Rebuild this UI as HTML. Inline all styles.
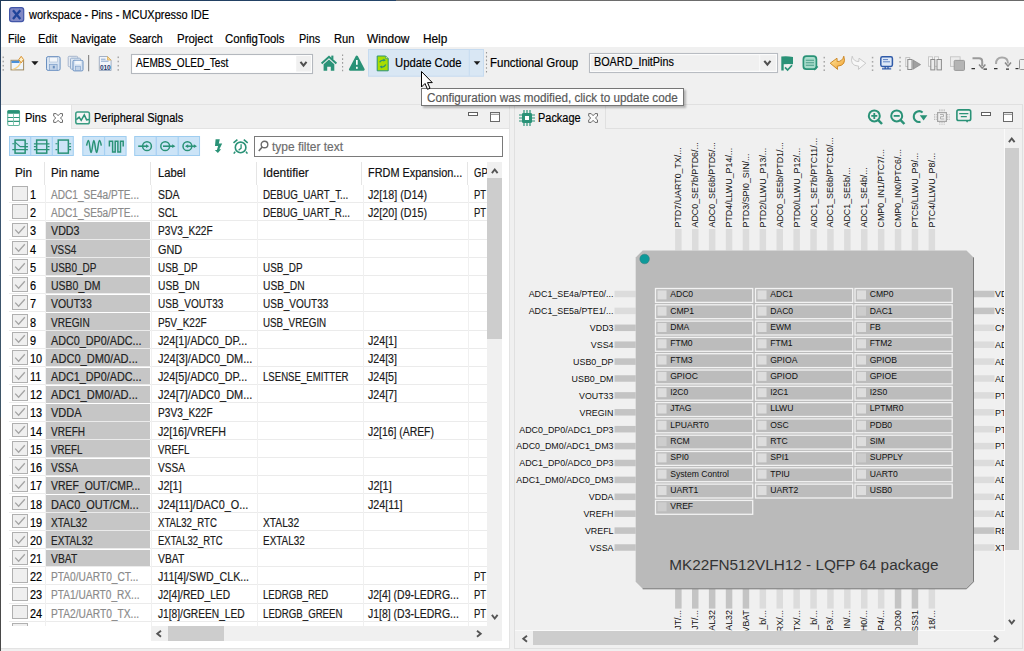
<!DOCTYPE html><html><head><meta charset="utf-8"><title>MCUXpresso</title><style>
*{box-sizing:border-box;margin:0;padding:0}
html,body{width:1024px;height:651px;overflow:hidden;background:#f0f0f0;font-family:"Liberation Sans",sans-serif;color:#000;position:relative}
.a{position:absolute}
.t{position:absolute;white-space:nowrap;line-height:1}
svg{position:absolute;overflow:visible}
</style></head><body>
<div class="a" style="left:0;top:0;width:1024px;height:47px;background:#fff"></div>
<div class="a" style="left:0;top:0;width:1024px;height:1px;background:linear-gradient(90deg,#1f3a5a 0px,#24456a 396px,#6e6e6e 396px,#6a6a6a 1024px)"></div>
<div class="a" style="left:0;top:0;width:1px;height:651px;background:linear-gradient(180deg,#1f3a5a 0px,#3a5470 200px,#3e5566 417px,#505050 418px,#484848 651px)"></div>
<svg style="left:8.6px;top:6.6px" width="15.3" height="15.3" viewBox="0 0 15.3 15.3"><rect x="0.6" y="0.6" width="14.1" height="14.1" rx="2.4" fill="#8088c4" stroke="#4256a8" stroke-width="1.2"/><path d="M4 3.2 L11.3 12.1 M11.3 3.2 L4 12.1" stroke="#1f449a" stroke-width="2.3"/></svg>
<div class="t" style="left:29.15px;top:8.84px;font-size:12px;color:#000;transform:scaleX(0.9150);transform-origin:0 0;-webkit-text-stroke:0.18px #000;">workspace - Pins - MCUXpresso IDE</div>
<div class="t" style="left:8.05px;top:32.84px;font-size:12px;color:#000;transform:scaleX(0.8999);transform-origin:0 0;-webkit-text-stroke:0.18px #000;">File</div>
<div class="t" style="left:38.35px;top:32.84px;font-size:12px;color:#000;transform:scaleX(0.9334);transform-origin:0 0;-webkit-text-stroke:0.18px #000;">Edit</div>
<div class="t" style="left:71.35px;top:32.84px;font-size:12px;color:#000;transform:scaleX(0.9501);transform-origin:0 0;-webkit-text-stroke:0.18px #000;">Navigate</div>
<div class="t" style="left:129.35px;top:32.84px;font-size:12px;color:#000;transform:scaleX(0.8837);transform-origin:0 0;-webkit-text-stroke:0.18px #000;">Search</div>
<div class="t" style="left:176.85px;top:32.84px;font-size:12px;color:#000;transform:scaleX(0.9532);transform-origin:0 0;-webkit-text-stroke:0.18px #000;">Project</div>
<div class="t" style="left:225.35px;top:32.84px;font-size:12px;color:#000;transform:scaleX(0.9495);transform-origin:0 0;-webkit-text-stroke:0.18px #000;">ConfigTools</div>
<div class="t" style="left:299.35px;top:32.84px;font-size:12px;color:#000;transform:scaleX(0.9039);transform-origin:0 0;-webkit-text-stroke:0.18px #000;">Pins</div>
<div class="t" style="left:333.85px;top:32.84px;font-size:12px;color:#000;transform:scaleX(0.9312);transform-origin:0 0;-webkit-text-stroke:0.18px #000;">Run</div>
<div class="t" style="left:367.35px;top:32.84px;font-size:12px;color:#000;transform:scaleX(0.9958);transform-origin:0 0;-webkit-text-stroke:0.18px #000;">Window</div>
<div class="t" style="left:422.85px;top:32.84px;font-size:12px;color:#000;transform:scaleX(0.9846);transform-origin:0 0;-webkit-text-stroke:0.18px #000;">Help</div>
<svg style="left:0;top:47px" width="1024" height="32" viewBox="0 47 1024 32"><rect x="2.5" y="56.50" width="1.5" height="1.6" fill="#a8a8a8"/><rect x="2.5" y="60.70" width="1.5" height="1.6" fill="#a8a8a8"/><rect x="2.5" y="64.90" width="1.5" height="1.6" fill="#a8a8a8"/><rect x="2.5" y="69.10" width="1.5" height="1.6" fill="#a8a8a8"/><rect x="11" y="60.3" width="12.6" height="9.6" fill="#eef5fc" stroke="#a08a60" stroke-width="1"/><rect x="11.5" y="60.8" width="8" height="2.2" fill="#4a90d8"/><path d="M12.5 69.5 Q19 68 21 61.5" stroke="#f8d080" stroke-width="1.2" fill="none"/><path d="M21.2 56.3 L23.6 59.6 L21.2 62.9 L18.8 59.6Z" fill="#fff0c8" stroke="#d89030" stroke-width="1"/><path d="M31.3 61.3h7.2L34.9 65.2z" fill="#1a1a1a"/><rect x="46.5" y="56.6" width="13.6" height="13.8" rx="1.6" fill="#d8e4f2" stroke="#6a90c0" stroke-width="1"/><rect x="49.3" y="57.2" width="8" height="4.8" fill="#f4f7fb" stroke="#a8bcd4" stroke-width="0.6"/><rect x="49.5" y="64.6" width="7.6" height="5.6" fill="#c4d4e8" stroke="#7a9cc8" stroke-width="0.7"/><rect x="52.8" y="65.8" width="2" height="2.6" fill="#6a90c0"/><rect x="68.2" y="56.3" width="9.5" height="10.5" rx="1" fill="#e4eaf2" stroke="#a0b0c8" stroke-width="0.9"/><rect x="70.5" y="58.2" width="10" height="11" rx="1" fill="#dce6f2" stroke="#90a8c8" stroke-width="0.9"/><rect x="73" y="60.3" width="10" height="10.6" rx="1.2" fill="#d8e4f2" stroke="#6a90c0" stroke-width="1"/><rect x="75.2" y="60.8" width="5.6" height="3.4" fill="#f4f7fb"/><rect x="75.4" y="66.2" width="5.2" height="4.3" fill="#c4d4e8" stroke="#7a9cc8" stroke-width="0.6"/><rect x="88" y="55" width="1.2" height="16.3" fill="#8a8a8a"/><path d="M99.3 56.5h8.2l3.6 3.6v10.4h-11.8z" fill="#f2f5fa" stroke="#98a8c0" stroke-width="0.9"/><path d="M107.5 56.5v3.6h3.6z" fill="#f8d890" stroke="#d8a850" stroke-width="0.7"/><path d="M101 59.2h4.5M101 61.2h7.5" stroke="#7c9cc8" stroke-width="0.9"/><text x="105.2" y="69.6" font-size="6.6" font-family="Liberation Sans" text-anchor="middle" fill="#1e3a6e" font-weight="bold" letter-spacing="-0.2">010</text><rect x="117.5" y="56.50" width="1.5" height="1.6" fill="#a8a8a8"/><rect x="117.5" y="60.70" width="1.5" height="1.6" fill="#a8a8a8"/><rect x="117.5" y="64.90" width="1.5" height="1.6" fill="#a8a8a8"/><rect x="117.5" y="69.10" width="1.5" height="1.6" fill="#a8a8a8"/><rect x="131.5" y="54.5" width="181" height="19" fill="#fff" stroke="#b4b8be" stroke-width="1.1"/><rect x="296.2" y="56" width="14.8" height="15.6" fill="#f0f0f0"/><path d="M300.5 61.9L303.5 65.6L306.5 61.9" stroke="#505050" stroke-width="2.1" fill="none"/><path d="M321.6 63.6 L329 56.8 L336.4 63.6" stroke="#2a9277" stroke-width="2" fill="none"/><path d="M323.6 64.2 L329 59.4 L334.3 64.2 V70.8 H330.8 V66.7 H327.2 V70.8 H323.6 Z" fill="#2a9277"/><rect x="331.3" y="55.6" width="2.1" height="3.6" fill="#2a9277"/><path d="M342.6 54.5V72" stroke="#999" stroke-width="1.1" stroke-dasharray="1.6 2.2"/><path d="M356.8 56.6 L363.6 69.6 H350 Z" fill="#2a9277" stroke="#2a9277" stroke-width="2.2" stroke-linejoin="round"/><rect x="356" y="60" width="1.7" height="4.8" fill="#fff"/><rect x="356" y="66.8" width="1.7" height="2" fill="#fff"/><rect x="368.5" y="49.5" width="115" height="26.7" fill="#d9e7f4" stroke="#c6dbf0" stroke-width="1"/><rect x="468.8" y="50" width="1" height="25.7" fill="#c6dbf0"/><path d="M377.2 56h8.4l2.6 2.6v12.2h-11z" fill="#a8de00" stroke="#2a9277" stroke-width="1"/><path d="M385.6 56v2.6h2.6" fill="#cfe88a" stroke="#2a9277" stroke-width="0.6"/><path d="M379.6 62.3 Q381 59.5 384.4 60.2M385.8 64.6 Q384.4 67.6 381 66.9" stroke="#2a9277" stroke-width="1.3" fill="none"/><path d="M383.6 58.6l2.2 1.9l-2.6 1z" fill="#2a9277"/><path d="M381.8 68.4l-2.2 -1.9l2.6 -1z" fill="#2a9277"/><path d="M473.7 61.2h6.6L477 65z" fill="#1a1a1a"/><path d="M486.5 52V73" stroke="#999" stroke-width="1.1" stroke-dasharray="1.6 2.2"/><rect x="589.5" y="53.5" width="188" height="19" fill="#f0f0f0" stroke="#b8bcc2" stroke-width="1.1"/><rect x="590.6" y="54.6" width="185.8" height="16.8" fill="none" stroke="#fbfbfb" stroke-width="1.1"/><rect x="759.2" y="55" width="1" height="17" fill="#fafafa"/><path d="M764.3 60.8L767.4 64.6L770.5 60.8" stroke="#505050" stroke-width="2.1" fill="none"/><path d="M781.3 56.5 Q787 55.8 793 56.9 V64.2 Q788.5 63.6 783.7 64.2 V70.6 H781.3 Z" fill="#2a9277"/><path d="M785 67.3 L787.6 70 L792 65.2" stroke="#2a9277" stroke-width="1.7" fill="none"/><rect x="803.4" y="56.2" width="13" height="13" rx="3" fill="#a8dccb" stroke="#2a9277" stroke-width="1.7"/><path d="M805.8 60.2h8.2M805.8 62.7h8.2M805.8 65.2h8.2" stroke="#4a9a88" stroke-width="1.1"/><path d="M813.5 69.5l3.8 -3.6l1 1l-3.8 3.6z" fill="#2a9277"/><rect x="823.5" y="56.80" width="1.5" height="1.6" fill="#a8a8a8"/><rect x="823.5" y="61.00" width="1.5" height="1.6" fill="#a8a8a8"/><rect x="823.5" y="65.20" width="1.5" height="1.6" fill="#a8a8a8"/><rect x="823.5" y="69.40" width="1.5" height="1.6" fill="#a8a8a8"/><defs><linearGradient id="og" x1="0" y1="0" x2="1" y2="1"><stop offset="0" stop-color="#ffe8a0"/><stop offset="1" stop-color="#f0a030"/></linearGradient></defs><path d="M843.8 56.2 Q846.8 65.5 837.3 66.2 L837.6 69.4 L830.2 63.2 L837 58.2 L837.2 61.6 Q842.4 61.6 843.8 56.2Z" fill="url(#og)" stroke="#c8821e" stroke-width="0.9" stroke-linejoin="round"/><path d="M852.2 56.2 Q849.2 65.5 858.7 66.2 L858.4 69.4 L865.8 63.2 L859 58.2 L858.8 61.6 Q853.6 61.6 852.2 56.2Z" fill="#f7f7f7" stroke="#c4c4c4" stroke-width="0.9" stroke-linejoin="round"/><rect x="871.8" y="56.80" width="1.5" height="1.6" fill="#a8a8a8"/><rect x="871.8" y="61.00" width="1.5" height="1.6" fill="#a8a8a8"/><rect x="871.8" y="65.20" width="1.5" height="1.6" fill="#a8a8a8"/><rect x="871.8" y="69.40" width="1.5" height="1.6" fill="#a8a8a8"/><rect x="880.8" y="56.8" width="11.6" height="9.6" rx="1.6" fill="#dde8f7" stroke="#2f5aa8" stroke-width="1.5"/><path d="M883 59.6h5M883 61.8h7" stroke="#5078c0" stroke-width="0.9"/><path d="M885.2 66.6v1.8M888 66.6v1.8M882 68.8h9.2" stroke="#2f5aa8" stroke-width="1.3"/><rect x="899.3" y="56.80" width="1.5" height="1.6" fill="#a8a8a8"/><rect x="899.3" y="61.00" width="1.5" height="1.6" fill="#a8a8a8"/><rect x="899.3" y="65.20" width="1.5" height="1.6" fill="#a8a8a8"/><rect x="899.3" y="69.40" width="1.5" height="1.6" fill="#a8a8a8"/><rect x="905.8" y="57.6" width="4" height="9" fill="#f6f6f6" stroke="#bdbdbd" stroke-width="0.9"/><rect x="907.8" y="59.5" width="4.2" height="10" fill="#f0f0f0" stroke="#8c8c8c" stroke-width="1"/><path d="M913 60l7.6 4.6L913 69.2z" fill="#a0a0a0" stroke="#888" stroke-width="0.7"/><rect x="928.5" y="56.8" width="4" height="9.5" fill="#f6f6f6" stroke="#c4c4c4" stroke-width="0.9"/><rect x="934.5" y="56.8" width="4" height="9.5" fill="#f6f6f6" stroke="#c4c4c4" stroke-width="0.9"/><rect x="930.8" y="59.5" width="4" height="10.4" fill="#ececec" stroke="#8c8c8c" stroke-width="1"/><rect x="937" y="59.5" width="4.4" height="10.4" fill="#ececec" stroke="#8c8c8c" stroke-width="1"/><rect x="950.5" y="56.8" width="9.6" height="9.6" fill="#ececec" stroke="#c4c4c4" stroke-width="0.9"/><rect x="954.2" y="60.4" width="10.3" height="10" rx="1" fill="#b4b4b4" stroke="#9a9a9a" stroke-width="1"/><path d="M972.5 58.2h6.5q3.2 0 3.2 3.2v4.6" stroke="#9a9a9a" stroke-width="2" fill="none"/><path d="M979 64.6l3.2 3.6l3.2 -3.6" stroke="#888" stroke-width="1.5" fill="none"/><path d="M971.5 68.6h3.5M983.5 69.2h3.5" stroke="#333" stroke-width="1.2"/><path d="M996 64 Q996 57.5 1002 57.5 Q1008 57.5 1008 63.5" stroke="#a8a8a8" stroke-width="2" fill="none"/><path d="M1005 62.6l3 3.6l3 -3.6" stroke="#888" stroke-width="1.5" fill="none"/><path d="M994 68.6h3.5M1006 69.2h3" stroke="#333" stroke-width="1.2"/><path d="M1015.5 68.6h3" stroke="#333" stroke-width="1.2"/><rect x="1019.5" y="59.5" width="6" height="10" rx="1" fill="#f0f0f0" stroke="#999" stroke-width="1"/></svg>
<div class="t" style="left:136.05px;top:56.84px;font-size:12px;color:#000;transform:scaleX(0.8386);transform-origin:0 0;-webkit-text-stroke:0.18px #000;">AEMBS_OLED_Test</div>
<div class="t" style="left:394.55px;top:56.84px;font-size:12px;color:#000;transform:scaleX(0.9418);transform-origin:0 0;-webkit-text-stroke:0.18px #000;">Update Code</div>
<div class="t" style="left:489.55px;top:56.84px;font-size:12px;color:#000;transform:scaleX(0.9582);transform-origin:0 0;-webkit-text-stroke:0.18px #000;">Functional Group</div>
<div class="t" style="left:593.55px;top:55.84px;font-size:12px;color:#000;transform:scaleX(0.9008);transform-origin:0 0;-webkit-text-stroke:0.18px #000;">BOARD_InitPins</div>
<div class="a" style="left:1px;top:104px;width:509px;height:545px;background:#fff;border:1px solid #e3e3e3;border-left:none"></div>
<div class="a" style="left:71px;top:105px;width:438px;height:23.5px;background:#f0f0f0;border-bottom:1px solid #e3e3e3"></div>
<div class="a" style="left:71px;top:105px;width:1px;height:24px;background:#e3e3e3"></div>
<svg style="left:7px;top:110px" width="13" height="16" viewBox="0 0 13 16"><rect x="0.7" y="0.5" width="11.8" height="15" rx="1.4" fill="#fff" stroke="#62b49c" stroke-width="1.1"/><rect x="0.5" y="0.2" width="12.2" height="3.6" rx="1" fill="#2a9277"/><path d="M0.7 7.5h11.8M0.7 11.4h11.8" stroke="#2f967b" stroke-width="1.1"/><path d="M6.5 3.8v11.6" stroke="#7cc2ac" stroke-width="0.9"/></svg>
<div class="t" style="left:24.95px;top:111.84px;font-size:12px;color:#000;transform:scaleX(0.9210);transform-origin:0 0;-webkit-text-stroke:0.18px #000;">Pins</div>
<svg style="left:53.2px;top:113px" width="10.2" height="10" viewBox="0 0 10 10"><path d="M0.6 0.6H3.1L5 2.7L6.9 0.6H9.4V3.1L7.3 5L9.4 6.9V9.4H6.9L5 7.3L3.1 9.4H0.6V6.9L2.7 5L0.6 3.1Z" fill="#fff" stroke="#6a6a6a" stroke-width="1" stroke-linejoin="round"/></svg>
<svg style="left:75px;top:111px" width="15" height="14" viewBox="0 0 15 14"><rect x="0.8" y="0.9" width="13.6" height="11.9" rx="1.8" fill="#f6f6f6" stroke="#3a9c82" stroke-width="1.5"/><path d="M1.3 8.6L4.1 6.2L6.2 9.4L9.3 3.9L11.6 8.8L14 8.4" stroke="#2a9277" stroke-width="1.5" fill="none"/></svg>
<div class="t" style="left:94.05px;top:111.84px;font-size:12px;color:#000;transform:scaleX(0.9159);transform-origin:0 0;-webkit-text-stroke:0.18px #000;">Peripheral Signals</div>
<div class="a" style="left:468px;top:112px;width:9.5px;height:4.3px;border:1px solid #606060;background:#fff"></div>
<svg style="left:489.8px;top:112px" width="10" height="10" viewBox="0 0 10 10"><rect x="0.5" y="0.5" width="9" height="9" fill="#fff" stroke="#6a6a6a" stroke-width="1"/><path d="M0.5 2.3H9.5" stroke="#7a7a7a" stroke-width="0.9"/></svg>
<svg style="left:0;top:130px" width="260" height="30" viewBox="0 130 260 30"><rect x="9.5" y="136.5" width="63.80000000000001" height="19" fill="#cce4f7" stroke="#9fcdf0" stroke-width="1"/><rect x="30.1" y="137" width="1.2" height="18" fill="#a6d0f2"/><rect x="51.7" y="137" width="1.2" height="18" fill="#a6d0f2"/><rect x="82.8" y="136.5" width="43.3" height="19" fill="#cce4f7" stroke="#9fcdf0" stroke-width="1"/><rect x="103.94999999999999" y="137" width="1.2" height="18" fill="#a6d0f2"/><rect x="134.7" y="136.5" width="64.85" height="19" fill="#cce4f7" stroke="#9fcdf0" stroke-width="1"/><rect x="155.64999999999998" y="137" width="1.2" height="18" fill="#a6d0f2"/><rect x="177.6" y="137" width="1.2" height="18" fill="#a6d0f2"/><rect x="15.05" y="140.05" width="10.099999999999998" height="13.1" fill="none" stroke="#2a9277" stroke-width="1.5"/><path d="M12.3 143.8H14.3M25.9 143.8H27.9M12.3 149.6H27.9M25.9 146.6H27.9" stroke="#2a9277" stroke-width="1.1"/><path d="M15.0 142.2L20.3 146.6H27.9" stroke="#2a9277" stroke-width="1.1" fill="none"/><rect x="36.65" y="140.05" width="10.100000000000001" height="13.1" fill="none" stroke="#2a9277" stroke-width="1.5"/><path d="M33.9 143.8H49.5M33.9 149.6H49.5M47.5 146.6H49.5M33.9 146.6H35.9" stroke="#2a9277" stroke-width="1.2"/><rect x="58.25" y="140.05" width="10.099999999999994" height="13.1" fill="none" stroke="#2a9277" stroke-width="1.5"/><path d="M55.5 143.8H57.5M55.5 149.6H57.5M69.1 143.8H71.1M69.1 146.6H71.1M69.1 149.6H71.1" stroke="#2a9277" stroke-width="1.1"/><path d="M86.6 145.7 C87.2 143 87.8 140.6 88.5 140.6 C89.6 140.6 90 152.5 91.1 152.5 C92.3 152.5 92.7 140.6 93.85 140.6 C95 140.6 95.4 152.5 96.6 152.5 C97.8 152.5 98.2 140.6 99.4 140.6 C100.2 140.6 100.8 143 101.3 145.7" stroke="#2a9277" stroke-width="1.5" fill="none"/><path d="M109.4 146.4V141.3H112.6V152H115.2V141.3H117.9V152H120.5V141.3H123.2V146.4" stroke="#2a9277" stroke-width="1.5" fill="none"/><circle cx="147" cy="146.2" r="4.4" fill="none" stroke="#2a9277" stroke-width="1.5"/><path d="M138.2 146.2H147" stroke="#2a9277" stroke-width="1.6"/><path d="M146 144.3L149.2 146.2L146 148.1z" fill="#2a9277"/><circle cx="165.2" cy="146.2" r="4.4" fill="none" stroke="#2a9277" stroke-width="1.5"/><path d="M163 146.2H173" stroke="#2a9277" stroke-width="1.6"/><path d="M172.2 144.3L175.4 146.2L172.2 148.1z" fill="#2a9277"/><circle cx="187.4" cy="146.2" r="4.4" fill="none" stroke="#2a9277" stroke-width="1.5"/><path d="M186.5 146.2H194.5" stroke="#2a9277" stroke-width="1.5"/><path d="M188.2 144.3L185 146.2L188.2 148.1z" fill="#2a9277"/><path d="M193.8 144.3L197 146.2L193.8 148.1z" fill="#2a9277"/><path d="M215.6 139.2H219.8L218.8 143.5H222.2L219.4 149.2H221.1L217.9 153.1L214.8 149.9H216.9L218.1 146H215z" fill="#2a9277"/><circle cx="240.6" cy="147.4" r="5.3" fill="none" stroke="#2a9277" stroke-width="1.6"/><path d="M233.5 142.9L237.4 139.7M243.8 139.7L247.7 142.9" stroke="#2a9277" stroke-width="1.6"/><path d="M235.2 151.6L233.8 153.6M246 151.6L247.4 153.6" stroke="#2a9277" stroke-width="1.6"/><path d="M241.1 144.3V148.1L238.6 150.2" stroke="#2a9277" stroke-width="1.3" fill="none"/></svg>
<div class="a" style="left:254px;top:136px;width:249px;height:21px;border:1px solid #7a7a7a;background:#fff"></div>
<svg style="left:258px;top:140px" width="11" height="12" viewBox="0 0 11 12"><circle cx="6.5" cy="4.5" r="3.3" fill="none" stroke="#6a6a6a" stroke-width="1.4"/><path d="M4.2 7L0.8 11" stroke="#6a6a6a" stroke-width="1.6"/></svg>
<div class="t" style="left:271.85px;top:140.84px;font-size:12px;color:#6d6d6d;transform:scaleX(0.9949);transform-origin:0 0;-webkit-text-stroke:0.18px #6d6d6d;">type filter text</div>
<div class="a" style="left:44px;top:162px;width:1px;height:22.5px;background:#e5e5e5"></div>
<div class="a" style="left:150px;top:162px;width:1px;height:22.5px;background:#e5e5e5"></div>
<div class="a" style="left:256px;top:162px;width:1px;height:22.5px;background:#e5e5e5"></div>
<div class="a" style="left:361.2px;top:162px;width:1px;height:22.5px;background:#e5e5e5"></div>
<div class="a" style="left:467.2px;top:162px;width:1px;height:22.5px;background:#e5e5e5"></div>
<div class="t" style="left:14.75px;top:166.84px;font-size:12px;color:#111;transform:scaleX(0.9802);transform-origin:0 0;-webkit-text-stroke:0.18px #111;">Pin</div>
<div class="t" style="left:50.75px;top:166.84px;font-size:12px;color:#111;transform:scaleX(0.9567);transform-origin:0 0;-webkit-text-stroke:0.18px #111;">Pin name</div>
<div class="t" style="left:158.05px;top:166.84px;font-size:12px;color:#111;transform:scaleX(0.9351);transform-origin:0 0;-webkit-text-stroke:0.18px #111;">Label</div>
<div class="t" style="left:262.85px;top:166.84px;font-size:12px;color:#111;transform:scaleX(0.9940);transform-origin:0 0;-webkit-text-stroke:0.18px #111;">Identifier</div>
<div class="t" style="left:368.45px;top:166.84px;font-size:12px;color:#111;transform:scaleX(0.9074);transform-origin:0 0;-webkit-text-stroke:0.18px #111;">FRDM Expansion...</div>
<div class="t" style="left:473.55px;top:166.84px;font-size:12px;color:#111;transform:scaleX(0.7903);transform-origin:0 0;-webkit-text-stroke:0.18px #111;">GP</div>
<div class="a" style="left:1px;top:184.5px;width:486px;height:441px;overflow:hidden">
<div class="a" style="left:7.5px;top:17.60px;width:478.5px;height:1px;background:#ebebeb"></div>
<div class="a" style="left:11.4px;top:1.60px;width:15.4px;height:14.8px;border:1.4px solid #b0b0b0;background:#efefef"></div>
<div class="t" style="left:28.75px;top:4.34px;font-size:12px;color:#000;transform:scaleX(0.9090);transform-origin:0 0;-webkit-text-stroke:0.18px #000;">1</div>
<div class="t" style="left:49.85px;top:4.34px;font-size:12px;color:#8a8a8a;transform:scaleX(0.8404);transform-origin:0 0;-webkit-text-stroke:0.18px #8a8a8a;">ADC1_SE4a/PTE...</div>
<div class="t" style="left:157.35px;top:4.34px;font-size:12px;color:#1a1a1a;transform:scaleX(0.8754);transform-origin:0 0;-webkit-text-stroke:0.18px #1a1a1a;">SDA</div>
<div class="t" style="left:261.85px;top:4.34px;font-size:12px;color:#1a1a1a;transform:scaleX(0.8159);transform-origin:0 0;-webkit-text-stroke:0.18px #1a1a1a;">DEBUG_UART_T...</div>
<div class="t" style="left:367.35px;top:4.34px;font-size:12px;color:#1a1a1a;transform:scaleX(0.8935);transform-origin:0 0;-webkit-text-stroke:0.18px #1a1a1a;">J2[18] (D14)</div>
<div class="t" style="left:472.55px;top:4.34px;font-size:12px;color:#1a1a1a;transform:scaleX(0.7903);transform-origin:0 0;-webkit-text-stroke:0.18px #1a1a1a;">PT</div>
<div class="a" style="left:7.5px;top:35.80px;width:478.5px;height:1px;background:#ebebeb"></div>
<div class="a" style="left:11.4px;top:19.80px;width:15.4px;height:14.8px;border:1.4px solid #b0b0b0;background:#efefef"></div>
<div class="t" style="left:28.75px;top:22.34px;font-size:12px;color:#000;transform:scaleX(0.9090);transform-origin:0 0;-webkit-text-stroke:0.18px #000;">2</div>
<div class="t" style="left:49.85px;top:22.34px;font-size:12px;color:#8a8a8a;transform:scaleX(0.8404);transform-origin:0 0;-webkit-text-stroke:0.18px #8a8a8a;">ADC1_SE5a/PTE...</div>
<div class="t" style="left:157.35px;top:22.34px;font-size:12px;color:#1a1a1a;transform:scaleX(0.8396);transform-origin:0 0;-webkit-text-stroke:0.18px #1a1a1a;">SCL</div>
<div class="t" style="left:261.85px;top:22.34px;font-size:12px;color:#1a1a1a;transform:scaleX(0.8123);transform-origin:0 0;-webkit-text-stroke:0.18px #1a1a1a;">DEBUG_UART_R...</div>
<div class="t" style="left:367.35px;top:22.34px;font-size:12px;color:#1a1a1a;transform:scaleX(0.8935);transform-origin:0 0;-webkit-text-stroke:0.18px #1a1a1a;">J2[20] (D15)</div>
<div class="t" style="left:472.55px;top:22.34px;font-size:12px;color:#1a1a1a;transform:scaleX(0.7903);transform-origin:0 0;-webkit-text-stroke:0.18px #1a1a1a;">PT</div>
<div class="a" style="left:7.5px;top:54.00px;width:478.5px;height:1px;background:#ebebeb"></div>
<div class="a" style="left:45px;top:37.40px;width:104.3px;height:16.90px;background:#c6c6c6"></div>
<div class="a" style="left:11.4px;top:38.00px;width:15.4px;height:14.8px;border:1.4px solid #b0b0b0;background:#efefef"></div>
<svg style="left:13.4px;top:40.60px" width="12" height="10" viewBox="0 0 12 10"><path d="M1.2 4.6L4.6 8.2L10.8 1.2" stroke="#a4a4a4" stroke-width="1.3" fill="none"/></svg>
<div class="t" style="left:28.75px;top:40.34px;font-size:12px;color:#000;transform:scaleX(0.9090);transform-origin:0 0;-webkit-text-stroke:0.18px #000;">3</div>
<div class="t" style="left:49.85px;top:40.34px;font-size:12px;color:#222;transform:scaleX(0.8904);transform-origin:0 0;-webkit-text-stroke:0.18px #222;">VDD3</div>
<div class="t" style="left:157.35px;top:40.34px;font-size:12px;color:#1a1a1a;transform:scaleX(0.8438);transform-origin:0 0;-webkit-text-stroke:0.18px #1a1a1a;">P3V3_K22F</div>
<div class="a" style="left:7.5px;top:72.20px;width:478.5px;height:1px;background:#ebebeb"></div>
<div class="a" style="left:45px;top:55.60px;width:104.3px;height:16.90px;background:#c6c6c6"></div>
<div class="a" style="left:11.4px;top:56.20px;width:15.4px;height:14.8px;border:1.4px solid #b0b0b0;background:#efefef"></div>
<svg style="left:13.4px;top:58.80px" width="12" height="10" viewBox="0 0 12 10"><path d="M1.2 4.6L4.6 8.2L10.8 1.2" stroke="#a4a4a4" stroke-width="1.3" fill="none"/></svg>
<div class="t" style="left:28.75px;top:59.34px;font-size:12px;color:#000;transform:scaleX(0.9090);transform-origin:0 0;-webkit-text-stroke:0.18px #000;">4</div>
<div class="t" style="left:49.85px;top:59.34px;font-size:12px;color:#222;transform:scaleX(0.8212);transform-origin:0 0;-webkit-text-stroke:0.18px #222;">VSS4</div>
<div class="t" style="left:157.35px;top:59.34px;font-size:12px;color:#1a1a1a;transform:scaleX(0.9075);transform-origin:0 0;-webkit-text-stroke:0.18px #1a1a1a;">GND</div>
<div class="a" style="left:7.5px;top:90.40px;width:478.5px;height:1px;background:#ebebeb"></div>
<div class="a" style="left:45px;top:73.80px;width:104.3px;height:16.90px;background:#c6c6c6"></div>
<div class="a" style="left:11.4px;top:74.40px;width:15.4px;height:14.8px;border:1.4px solid #b0b0b0;background:#efefef"></div>
<svg style="left:13.4px;top:77.00px" width="12" height="10" viewBox="0 0 12 10"><path d="M1.2 4.6L4.6 8.2L10.8 1.2" stroke="#a4a4a4" stroke-width="1.3" fill="none"/></svg>
<div class="t" style="left:28.75px;top:77.34px;font-size:12px;color:#000;transform:scaleX(0.9090);transform-origin:0 0;-webkit-text-stroke:0.18px #000;">5</div>
<div class="t" style="left:49.85px;top:77.34px;font-size:12px;color:#222;transform:scaleX(0.8301);transform-origin:0 0;-webkit-text-stroke:0.18px #222;">USB0_DP</div>
<div class="t" style="left:157.35px;top:77.34px;font-size:12px;color:#1a1a1a;transform:scaleX(0.8247);transform-origin:0 0;-webkit-text-stroke:0.18px #1a1a1a;">USB_DP</div>
<div class="t" style="left:261.85px;top:77.34px;font-size:12px;color:#1a1a1a;transform:scaleX(0.8247);transform-origin:0 0;-webkit-text-stroke:0.18px #1a1a1a;">USB_DP</div>
<div class="a" style="left:7.5px;top:108.60px;width:478.5px;height:1px;background:#ebebeb"></div>
<div class="a" style="left:45px;top:92.00px;width:104.3px;height:16.90px;background:#c6c6c6"></div>
<div class="a" style="left:11.4px;top:92.60px;width:15.4px;height:14.8px;border:1.4px solid #b0b0b0;background:#efefef"></div>
<svg style="left:13.4px;top:95.20px" width="12" height="10" viewBox="0 0 12 10"><path d="M1.2 4.6L4.6 8.2L10.8 1.2" stroke="#a4a4a4" stroke-width="1.3" fill="none"/></svg>
<div class="t" style="left:28.75px;top:95.34px;font-size:12px;color:#000;transform:scaleX(0.9090);transform-origin:0 0;-webkit-text-stroke:0.18px #000;">6</div>
<div class="t" style="left:49.85px;top:95.34px;font-size:12px;color:#222;transform:scaleX(0.8733);transform-origin:0 0;-webkit-text-stroke:0.18px #222;">USB0_DM</div>
<div class="t" style="left:157.35px;top:95.34px;font-size:12px;color:#1a1a1a;transform:scaleX(0.8546);transform-origin:0 0;-webkit-text-stroke:0.18px #1a1a1a;">USB_DN</div>
<div class="t" style="left:261.85px;top:95.34px;font-size:12px;color:#1a1a1a;transform:scaleX(0.8546);transform-origin:0 0;-webkit-text-stroke:0.18px #1a1a1a;">USB_DN</div>
<div class="a" style="left:7.5px;top:126.80px;width:478.5px;height:1px;background:#ebebeb"></div>
<div class="a" style="left:45px;top:110.20px;width:104.3px;height:16.90px;background:#c6c6c6"></div>
<div class="a" style="left:11.4px;top:110.80px;width:15.4px;height:14.8px;border:1.4px solid #b0b0b0;background:#efefef"></div>
<svg style="left:13.4px;top:113.40px" width="12" height="10" viewBox="0 0 12 10"><path d="M1.2 4.6L4.6 8.2L10.8 1.2" stroke="#a4a4a4" stroke-width="1.3" fill="none"/></svg>
<div class="t" style="left:28.75px;top:113.34px;font-size:12px;color:#000;transform:scaleX(0.9090);transform-origin:0 0;-webkit-text-stroke:0.18px #000;">7</div>
<div class="t" style="left:49.85px;top:113.34px;font-size:12px;color:#222;transform:scaleX(0.8719);transform-origin:0 0;-webkit-text-stroke:0.18px #222;">VOUT33</div>
<div class="t" style="left:157.35px;top:113.34px;font-size:12px;color:#1a1a1a;transform:scaleX(0.8369);transform-origin:0 0;-webkit-text-stroke:0.18px #1a1a1a;">USB_VOUT33</div>
<div class="t" style="left:261.85px;top:113.34px;font-size:12px;color:#1a1a1a;transform:scaleX(0.8369);transform-origin:0 0;-webkit-text-stroke:0.18px #1a1a1a;">USB_VOUT33</div>
<div class="a" style="left:7.5px;top:145.00px;width:478.5px;height:1px;background:#ebebeb"></div>
<div class="a" style="left:45px;top:128.40px;width:104.3px;height:16.90px;background:#c6c6c6"></div>
<div class="a" style="left:11.4px;top:129.00px;width:15.4px;height:14.8px;border:1.4px solid #b0b0b0;background:#efefef"></div>
<svg style="left:13.4px;top:131.60px" width="12" height="10" viewBox="0 0 12 10"><path d="M1.2 4.6L4.6 8.2L10.8 1.2" stroke="#a4a4a4" stroke-width="1.3" fill="none"/></svg>
<div class="t" style="left:28.75px;top:132.34px;font-size:12px;color:#000;transform:scaleX(0.9090);transform-origin:0 0;-webkit-text-stroke:0.18px #000;">8</div>
<div class="t" style="left:49.85px;top:132.34px;font-size:12px;color:#222;transform:scaleX(0.8412);transform-origin:0 0;-webkit-text-stroke:0.18px #222;">VREGIN</div>
<div class="t" style="left:157.35px;top:132.34px;font-size:12px;color:#1a1a1a;transform:scaleX(0.8391);transform-origin:0 0;-webkit-text-stroke:0.18px #1a1a1a;">P5V_K22F</div>
<div class="t" style="left:261.85px;top:132.34px;font-size:12px;color:#1a1a1a;transform:scaleX(0.8170);transform-origin:0 0;-webkit-text-stroke:0.18px #1a1a1a;">USB_VREGIN</div>
<div class="a" style="left:7.5px;top:163.20px;width:478.5px;height:1px;background:#ebebeb"></div>
<div class="a" style="left:45px;top:146.60px;width:104.3px;height:16.90px;background:#c6c6c6"></div>
<div class="a" style="left:11.4px;top:147.20px;width:15.4px;height:14.8px;border:1.4px solid #b0b0b0;background:#efefef"></div>
<svg style="left:13.4px;top:149.80px" width="12" height="10" viewBox="0 0 12 10"><path d="M1.2 4.6L4.6 8.2L10.8 1.2" stroke="#a4a4a4" stroke-width="1.3" fill="none"/></svg>
<div class="t" style="left:28.75px;top:150.34px;font-size:12px;color:#000;transform:scaleX(0.9090);transform-origin:0 0;-webkit-text-stroke:0.18px #000;">9</div>
<div class="t" style="left:49.85px;top:150.34px;font-size:12px;color:#222;transform:scaleX(0.8997);transform-origin:0 0;-webkit-text-stroke:0.18px #222;">ADC0_DP0/ADC...</div>
<div class="t" style="left:157.35px;top:150.34px;font-size:12px;color:#1a1a1a;transform:scaleX(0.8937);transform-origin:0 0;-webkit-text-stroke:0.18px #1a1a1a;">J24[1]/ADC0_DP...</div>
<div class="t" style="left:367.35px;top:150.34px;font-size:12px;color:#1a1a1a;transform:scaleX(0.8871);transform-origin:0 0;-webkit-text-stroke:0.18px #1a1a1a;">J24[1]</div>
<div class="a" style="left:7.5px;top:181.40px;width:478.5px;height:1px;background:#ebebeb"></div>
<div class="a" style="left:45px;top:164.80px;width:104.3px;height:16.90px;background:#c6c6c6"></div>
<div class="a" style="left:11.4px;top:165.40px;width:15.4px;height:14.8px;border:1.4px solid #b0b0b0;background:#efefef"></div>
<svg style="left:13.4px;top:168.00px" width="12" height="10" viewBox="0 0 12 10"><path d="M1.2 4.6L4.6 8.2L10.8 1.2" stroke="#a4a4a4" stroke-width="1.3" fill="none"/></svg>
<div class="t" style="left:28.75px;top:168.34px;font-size:12px;color:#000;transform:scaleX(0.9090);transform-origin:0 0;-webkit-text-stroke:0.18px #000;">10</div>
<div class="t" style="left:49.85px;top:168.34px;font-size:12px;color:#222;transform:scaleX(0.9232);transform-origin:0 0;-webkit-text-stroke:0.18px #222;">ADC0_DM0/AD...</div>
<div class="t" style="left:157.35px;top:168.34px;font-size:12px;color:#1a1a1a;transform:scaleX(0.9122);transform-origin:0 0;-webkit-text-stroke:0.18px #1a1a1a;">J24[3]/ADC0_DM...</div>
<div class="t" style="left:367.35px;top:168.34px;font-size:12px;color:#1a1a1a;transform:scaleX(0.8871);transform-origin:0 0;-webkit-text-stroke:0.18px #1a1a1a;">J24[3]</div>
<div class="a" style="left:7.5px;top:199.60px;width:478.5px;height:1px;background:#ebebeb"></div>
<div class="a" style="left:45px;top:183.00px;width:104.3px;height:16.90px;background:#c6c6c6"></div>
<div class="a" style="left:11.4px;top:183.60px;width:15.4px;height:14.8px;border:1.4px solid #b0b0b0;background:#efefef"></div>
<svg style="left:13.4px;top:186.20px" width="12" height="10" viewBox="0 0 12 10"><path d="M1.2 4.6L4.6 8.2L10.8 1.2" stroke="#a4a4a4" stroke-width="1.3" fill="none"/></svg>
<div class="t" style="left:28.75px;top:186.34px;font-size:12px;color:#000;transform:scaleX(0.9090);transform-origin:0 0;-webkit-text-stroke:0.18px #000;">11</div>
<div class="t" style="left:49.85px;top:186.34px;font-size:12px;color:#222;transform:scaleX(0.8997);transform-origin:0 0;-webkit-text-stroke:0.18px #222;">ADC1_DP0/ADC...</div>
<div class="t" style="left:157.35px;top:186.34px;font-size:12px;color:#1a1a1a;transform:scaleX(0.8937);transform-origin:0 0;-webkit-text-stroke:0.18px #1a1a1a;">J24[5]/ADC0_DP...</div>
<div class="t" style="left:261.85px;top:186.34px;font-size:12px;color:#1a1a1a;transform:scaleX(0.8014);transform-origin:0 0;-webkit-text-stroke:0.18px #1a1a1a;">LSENSE_EMITTER</div>
<div class="t" style="left:367.35px;top:186.34px;font-size:12px;color:#1a1a1a;transform:scaleX(0.8871);transform-origin:0 0;-webkit-text-stroke:0.18px #1a1a1a;">J24[5]</div>
<div class="a" style="left:7.5px;top:217.80px;width:478.5px;height:1px;background:#ebebeb"></div>
<div class="a" style="left:45px;top:201.20px;width:104.3px;height:16.90px;background:#c6c6c6"></div>
<div class="a" style="left:11.4px;top:201.80px;width:15.4px;height:14.8px;border:1.4px solid #b0b0b0;background:#efefef"></div>
<svg style="left:13.4px;top:204.40px" width="12" height="10" viewBox="0 0 12 10"><path d="M1.2 4.6L4.6 8.2L10.8 1.2" stroke="#a4a4a4" stroke-width="1.3" fill="none"/></svg>
<div class="t" style="left:28.75px;top:204.34px;font-size:12px;color:#000;transform:scaleX(0.9090);transform-origin:0 0;-webkit-text-stroke:0.18px #000;">12</div>
<div class="t" style="left:49.85px;top:204.34px;font-size:12px;color:#222;transform:scaleX(0.9232);transform-origin:0 0;-webkit-text-stroke:0.18px #222;">ADC1_DM0/AD...</div>
<div class="t" style="left:157.35px;top:204.34px;font-size:12px;color:#1a1a1a;transform:scaleX(0.9122);transform-origin:0 0;-webkit-text-stroke:0.18px #1a1a1a;">J24[7]/ADC0_DM...</div>
<div class="t" style="left:367.35px;top:204.34px;font-size:12px;color:#1a1a1a;transform:scaleX(0.8871);transform-origin:0 0;-webkit-text-stroke:0.18px #1a1a1a;">J24[7]</div>
<div class="a" style="left:7.5px;top:236.00px;width:478.5px;height:1px;background:#ebebeb"></div>
<div class="a" style="left:45px;top:219.40px;width:104.3px;height:16.90px;background:#c6c6c6"></div>
<div class="a" style="left:11.4px;top:220.00px;width:15.4px;height:14.8px;border:1.4px solid #b0b0b0;background:#efefef"></div>
<svg style="left:13.4px;top:222.60px" width="12" height="10" viewBox="0 0 12 10"><path d="M1.2 4.6L4.6 8.2L10.8 1.2" stroke="#a4a4a4" stroke-width="1.3" fill="none"/></svg>
<div class="t" style="left:28.75px;top:222.34px;font-size:12px;color:#000;transform:scaleX(0.9090);transform-origin:0 0;-webkit-text-stroke:0.18px #000;">13</div>
<div class="t" style="left:49.85px;top:222.34px;font-size:12px;color:#222;transform:scaleX(0.9178);transform-origin:0 0;-webkit-text-stroke:0.18px #222;">VDDA</div>
<div class="t" style="left:157.35px;top:222.34px;font-size:12px;color:#1a1a1a;transform:scaleX(0.8438);transform-origin:0 0;-webkit-text-stroke:0.18px #1a1a1a;">P3V3_K22F</div>
<div class="a" style="left:7.5px;top:254.20px;width:478.5px;height:1px;background:#ebebeb"></div>
<div class="a" style="left:45px;top:237.60px;width:104.3px;height:16.90px;background:#c6c6c6"></div>
<div class="a" style="left:11.4px;top:238.20px;width:15.4px;height:14.8px;border:1.4px solid #b0b0b0;background:#efefef"></div>
<svg style="left:13.4px;top:240.80px" width="12" height="10" viewBox="0 0 12 10"><path d="M1.2 4.6L4.6 8.2L10.8 1.2" stroke="#a4a4a4" stroke-width="1.3" fill="none"/></svg>
<div class="t" style="left:28.75px;top:241.34px;font-size:12px;color:#000;transform:scaleX(0.9090);transform-origin:0 0;-webkit-text-stroke:0.18px #000;">14</div>
<div class="t" style="left:49.85px;top:241.34px;font-size:12px;color:#222;transform:scaleX(0.8360);transform-origin:0 0;-webkit-text-stroke:0.18px #222;">VREFH</div>
<div class="t" style="left:157.35px;top:241.34px;font-size:12px;color:#1a1a1a;transform:scaleX(0.8866);transform-origin:0 0;-webkit-text-stroke:0.18px #1a1a1a;">J2[16]/VREFH</div>
<div class="t" style="left:367.35px;top:241.34px;font-size:12px;color:#1a1a1a;transform:scaleX(0.8669);transform-origin:0 0;-webkit-text-stroke:0.18px #1a1a1a;">J2[16] (AREF)</div>
<div class="a" style="left:7.5px;top:272.40px;width:478.5px;height:1px;background:#ebebeb"></div>
<div class="a" style="left:45px;top:255.80px;width:104.3px;height:16.90px;background:#c6c6c6"></div>
<div class="a" style="left:11.4px;top:256.40px;width:15.4px;height:14.8px;border:1.4px solid #b0b0b0;background:#efefef"></div>
<svg style="left:13.4px;top:259.00px" width="12" height="10" viewBox="0 0 12 10"><path d="M1.2 4.6L4.6 8.2L10.8 1.2" stroke="#a4a4a4" stroke-width="1.3" fill="none"/></svg>
<div class="t" style="left:28.75px;top:259.34px;font-size:12px;color:#000;transform:scaleX(0.9090);transform-origin:0 0;-webkit-text-stroke:0.18px #000;">15</div>
<div class="t" style="left:49.85px;top:259.34px;font-size:12px;color:#222;transform:scaleX(0.8118);transform-origin:0 0;-webkit-text-stroke:0.18px #222;">VREFL</div>
<div class="t" style="left:157.35px;top:259.34px;font-size:12px;color:#1a1a1a;transform:scaleX(0.8118);transform-origin:0 0;-webkit-text-stroke:0.18px #1a1a1a;">VREFL</div>
<div class="a" style="left:7.5px;top:290.60px;width:478.5px;height:1px;background:#ebebeb"></div>
<div class="a" style="left:45px;top:274.00px;width:104.3px;height:16.90px;background:#c6c6c6"></div>
<div class="a" style="left:11.4px;top:274.60px;width:15.4px;height:14.8px;border:1.4px solid #b0b0b0;background:#efefef"></div>
<svg style="left:13.4px;top:277.20px" width="12" height="10" viewBox="0 0 12 10"><path d="M1.2 4.6L4.6 8.2L10.8 1.2" stroke="#a4a4a4" stroke-width="1.3" fill="none"/></svg>
<div class="t" style="left:28.75px;top:277.34px;font-size:12px;color:#000;transform:scaleX(0.9090);transform-origin:0 0;-webkit-text-stroke:0.18px #000;">16</div>
<div class="t" style="left:49.85px;top:277.34px;font-size:12px;color:#222;transform:scaleX(0.8402);transform-origin:0 0;-webkit-text-stroke:0.18px #222;">VSSA</div>
<div class="t" style="left:157.35px;top:277.34px;font-size:12px;color:#1a1a1a;transform:scaleX(0.8402);transform-origin:0 0;-webkit-text-stroke:0.18px #1a1a1a;">VSSA</div>
<div class="a" style="left:7.5px;top:308.80px;width:478.5px;height:1px;background:#ebebeb"></div>
<div class="a" style="left:45px;top:292.20px;width:104.3px;height:16.90px;background:#c6c6c6"></div>
<div class="a" style="left:11.4px;top:292.80px;width:15.4px;height:14.8px;border:1.4px solid #b0b0b0;background:#efefef"></div>
<svg style="left:13.4px;top:295.40px" width="12" height="10" viewBox="0 0 12 10"><path d="M1.2 4.6L4.6 8.2L10.8 1.2" stroke="#a4a4a4" stroke-width="1.3" fill="none"/></svg>
<div class="t" style="left:28.75px;top:295.34px;font-size:12px;color:#000;transform:scaleX(0.9090);transform-origin:0 0;-webkit-text-stroke:0.18px #000;">17</div>
<div class="t" style="left:49.85px;top:295.34px;font-size:12px;color:#222;transform:scaleX(0.8711);transform-origin:0 0;-webkit-text-stroke:0.18px #222;">VREF_OUT/CMP...</div>
<div class="t" style="left:157.35px;top:295.34px;font-size:12px;color:#1a1a1a;transform:scaleX(0.9110);transform-origin:0 0;-webkit-text-stroke:0.18px #1a1a1a;">J2[1]</div>
<div class="t" style="left:367.35px;top:295.34px;font-size:12px;color:#1a1a1a;transform:scaleX(0.9110);transform-origin:0 0;-webkit-text-stroke:0.18px #1a1a1a;">J2[1]</div>
<div class="a" style="left:7.5px;top:327.00px;width:478.5px;height:1px;background:#ebebeb"></div>
<div class="a" style="left:45px;top:310.40px;width:104.3px;height:16.90px;background:#c6c6c6"></div>
<div class="a" style="left:11.4px;top:311.00px;width:15.4px;height:14.8px;border:1.4px solid #b0b0b0;background:#efefef"></div>
<svg style="left:13.4px;top:313.60px" width="12" height="10" viewBox="0 0 12 10"><path d="M1.2 4.6L4.6 8.2L10.8 1.2" stroke="#a4a4a4" stroke-width="1.3" fill="none"/></svg>
<div class="t" style="left:28.75px;top:314.34px;font-size:12px;color:#000;transform:scaleX(0.9090);transform-origin:0 0;-webkit-text-stroke:0.18px #000;">18</div>
<div class="t" style="left:49.85px;top:314.34px;font-size:12px;color:#222;transform:scaleX(0.9134);transform-origin:0 0;-webkit-text-stroke:0.18px #222;">DAC0_OUT/CM...</div>
<div class="t" style="left:157.35px;top:314.34px;font-size:12px;color:#1a1a1a;transform:scaleX(0.9035);transform-origin:0 0;-webkit-text-stroke:0.18px #1a1a1a;">J24[11]/DAC0_O...</div>
<div class="t" style="left:367.35px;top:314.34px;font-size:12px;color:#1a1a1a;transform:scaleX(0.8955);transform-origin:0 0;-webkit-text-stroke:0.18px #1a1a1a;">J24[11]</div>
<div class="a" style="left:7.5px;top:345.20px;width:478.5px;height:1px;background:#ebebeb"></div>
<div class="a" style="left:45px;top:328.60px;width:104.3px;height:16.90px;background:#c6c6c6"></div>
<div class="a" style="left:11.4px;top:329.20px;width:15.4px;height:14.8px;border:1.4px solid #b0b0b0;background:#efefef"></div>
<svg style="left:13.4px;top:331.80px" width="12" height="10" viewBox="0 0 12 10"><path d="M1.2 4.6L4.6 8.2L10.8 1.2" stroke="#a4a4a4" stroke-width="1.3" fill="none"/></svg>
<div class="t" style="left:28.75px;top:332.34px;font-size:12px;color:#000;transform:scaleX(0.9090);transform-origin:0 0;-webkit-text-stroke:0.18px #000;">19</div>
<div class="t" style="left:49.85px;top:332.34px;font-size:12px;color:#222;transform:scaleX(0.8533);transform-origin:0 0;-webkit-text-stroke:0.18px #222;">XTAL32</div>
<div class="t" style="left:157.35px;top:332.34px;font-size:12px;color:#1a1a1a;transform:scaleX(0.7992);transform-origin:0 0;-webkit-text-stroke:0.18px #1a1a1a;">XTAL32_RTC</div>
<div class="t" style="left:261.85px;top:332.34px;font-size:12px;color:#1a1a1a;transform:scaleX(0.8533);transform-origin:0 0;-webkit-text-stroke:0.18px #1a1a1a;">XTAL32</div>
<div class="a" style="left:7.5px;top:363.40px;width:478.5px;height:1px;background:#ebebeb"></div>
<div class="a" style="left:45px;top:346.80px;width:104.3px;height:16.90px;background:#c6c6c6"></div>
<div class="a" style="left:11.4px;top:347.40px;width:15.4px;height:14.8px;border:1.4px solid #b0b0b0;background:#efefef"></div>
<svg style="left:13.4px;top:350.00px" width="12" height="10" viewBox="0 0 12 10"><path d="M1.2 4.6L4.6 8.2L10.8 1.2" stroke="#a4a4a4" stroke-width="1.3" fill="none"/></svg>
<div class="t" style="left:28.75px;top:350.34px;font-size:12px;color:#000;transform:scaleX(0.9090);transform-origin:0 0;-webkit-text-stroke:0.18px #000;">20</div>
<div class="t" style="left:49.85px;top:350.34px;font-size:12px;color:#222;transform:scaleX(0.8294);transform-origin:0 0;-webkit-text-stroke:0.18px #222;">EXTAL32</div>
<div class="t" style="left:157.35px;top:350.34px;font-size:12px;color:#1a1a1a;transform:scaleX(0.7932);transform-origin:0 0;-webkit-text-stroke:0.18px #1a1a1a;">EXTAL32_RTC</div>
<div class="t" style="left:261.85px;top:350.34px;font-size:12px;color:#1a1a1a;transform:scaleX(0.8294);transform-origin:0 0;-webkit-text-stroke:0.18px #1a1a1a;">EXTAL32</div>
<div class="a" style="left:7.5px;top:381.60px;width:478.5px;height:1px;background:#ebebeb"></div>
<div class="a" style="left:45px;top:365.00px;width:104.3px;height:16.90px;background:#c6c6c6"></div>
<div class="a" style="left:11.4px;top:365.60px;width:15.4px;height:14.8px;border:1.4px solid #b0b0b0;background:#efefef"></div>
<svg style="left:13.4px;top:368.20px" width="12" height="10" viewBox="0 0 12 10"><path d="M1.2 4.6L4.6 8.2L10.8 1.2" stroke="#a4a4a4" stroke-width="1.3" fill="none"/></svg>
<div class="t" style="left:28.75px;top:368.34px;font-size:12px;color:#000;transform:scaleX(0.9090);transform-origin:0 0;-webkit-text-stroke:0.18px #000;">21</div>
<div class="t" style="left:49.85px;top:368.34px;font-size:12px;color:#222;transform:scaleX(0.8615);transform-origin:0 0;-webkit-text-stroke:0.18px #222;">VBAT</div>
<div class="t" style="left:157.35px;top:368.34px;font-size:12px;color:#1a1a1a;transform:scaleX(0.8615);transform-origin:0 0;-webkit-text-stroke:0.18px #1a1a1a;">VBAT</div>
<div class="a" style="left:7.5px;top:399.80px;width:478.5px;height:1px;background:#ebebeb"></div>
<div class="a" style="left:11.4px;top:383.80px;width:15.4px;height:14.8px;border:1.4px solid #b0b0b0;background:#efefef"></div>
<div class="t" style="left:28.75px;top:386.34px;font-size:12px;color:#000;transform:scaleX(0.9090);transform-origin:0 0;-webkit-text-stroke:0.18px #000;">22</div>
<div class="t" style="left:49.85px;top:386.34px;font-size:12px;color:#8a8a8a;transform:scaleX(0.8495);transform-origin:0 0;-webkit-text-stroke:0.18px #8a8a8a;">PTA0/UART0_CT...</div>
<div class="t" style="left:157.35px;top:386.34px;font-size:12px;color:#1a1a1a;transform:scaleX(0.8824);transform-origin:0 0;-webkit-text-stroke:0.18px #1a1a1a;">J11[4]/SWD_CLK...</div>
<div class="t" style="left:472.55px;top:386.34px;font-size:12px;color:#1a1a1a;transform:scaleX(0.7903);transform-origin:0 0;-webkit-text-stroke:0.18px #1a1a1a;">PT</div>
<div class="a" style="left:7.5px;top:418.00px;width:478.5px;height:1px;background:#ebebeb"></div>
<div class="a" style="left:11.4px;top:402.00px;width:15.4px;height:14.8px;border:1.4px solid #b0b0b0;background:#efefef"></div>
<div class="t" style="left:28.75px;top:404.34px;font-size:12px;color:#000;transform:scaleX(0.9090);transform-origin:0 0;-webkit-text-stroke:0.18px #000;">23</div>
<div class="t" style="left:49.85px;top:404.34px;font-size:12px;color:#8a8a8a;transform:scaleX(0.8441);transform-origin:0 0;-webkit-text-stroke:0.18px #8a8a8a;">PTA1/UART0_RX...</div>
<div class="t" style="left:157.35px;top:404.34px;font-size:12px;color:#1a1a1a;transform:scaleX(0.8500);transform-origin:0 0;-webkit-text-stroke:0.18px #1a1a1a;">J2[4]/RED_LED</div>
<div class="t" style="left:261.85px;top:404.34px;font-size:12px;color:#1a1a1a;transform:scaleX(0.8014);transform-origin:0 0;-webkit-text-stroke:0.18px #1a1a1a;">LEDRGB_RED</div>
<div class="t" style="left:367.35px;top:404.34px;font-size:12px;color:#1a1a1a;transform:scaleX(0.8728);transform-origin:0 0;-webkit-text-stroke:0.18px #1a1a1a;">J2[4] (D9-LEDRG...</div>
<div class="t" style="left:472.55px;top:404.34px;font-size:12px;color:#1a1a1a;transform:scaleX(0.7903);transform-origin:0 0;-webkit-text-stroke:0.18px #1a1a1a;">PT</div>
<div class="a" style="left:7.5px;top:436.20px;width:478.5px;height:1px;background:#ebebeb"></div>
<div class="a" style="left:11.4px;top:420.20px;width:15.4px;height:14.8px;border:1.4px solid #b0b0b0;background:#efefef"></div>
<div class="t" style="left:28.75px;top:423.34px;font-size:12px;color:#000;transform:scaleX(0.9090);transform-origin:0 0;-webkit-text-stroke:0.18px #000;">24</div>
<div class="t" style="left:49.85px;top:423.34px;font-size:12px;color:#8a8a8a;transform:scaleX(0.8501);transform-origin:0 0;-webkit-text-stroke:0.18px #8a8a8a;">PTA2/UART0_TX...</div>
<div class="t" style="left:157.35px;top:423.34px;font-size:12px;color:#1a1a1a;transform:scaleX(0.8497);transform-origin:0 0;-webkit-text-stroke:0.18px #1a1a1a;">J1[8]/GREEN_LED</div>
<div class="t" style="left:261.85px;top:423.34px;font-size:12px;color:#1a1a1a;transform:scaleX(0.8055);transform-origin:0 0;-webkit-text-stroke:0.18px #1a1a1a;">LEDRGB_GREEN</div>
<div class="t" style="left:367.35px;top:423.34px;font-size:12px;color:#1a1a1a;transform:scaleX(0.8728);transform-origin:0 0;-webkit-text-stroke:0.18px #1a1a1a;">J1[8] (D3-LEDRG...</div>
<div class="t" style="left:472.55px;top:423.34px;font-size:12px;color:#1a1a1a;transform:scaleX(0.7903);transform-origin:0 0;-webkit-text-stroke:0.18px #1a1a1a;">PT</div>
<div class="a" style="left:7.5px;top:454.40px;width:478.5px;height:1px;background:#ebebeb"></div>
<div class="a" style="left:11.4px;top:438.40px;width:15.4px;height:14.8px;border:1.4px solid #b0b0b0;background:#efefef"></div>
<div class="a" style="left:43.5px;top:0;width:1px;height:441px;background:#f0f0f0"></div>
<div class="a" style="left:149.5px;top:0;width:1px;height:441px;background:#f0f0f0"></div>
<div class="a" style="left:255.5px;top:0;width:1px;height:441px;background:#f0f0f0"></div>
<div class="a" style="left:361.5px;top:0;width:1px;height:441px;background:#f0f0f0"></div>
<div class="a" style="left:467px;top:0;width:1px;height:441px;background:#f0f0f0"></div>
</div>
<div class="a" style="left:487px;top:162px;width:15px;height:479px;background:#f0f0f0"></div>
<div class="a" style="left:487px;top:178.4px;width:15px;height:160.4px;background:#cdcdcd"></div>
<svg style="left:490.7px;top:168px" width="7.5" height="6" viewBox="0 0 7.5 6"><path d="M0.9 5.1L3.75 1.5L6.6 5.1" stroke="#555" stroke-width="1.9" fill="none"/></svg>
<svg style="left:490.7px;top:614px" width="7.5" height="6" viewBox="0 0 7.5 6"><path d="M0.9 0.9L3.75 4.5L6.6 0.9" stroke="#555" stroke-width="1.9" fill="none"/></svg>
<div class="a" style="left:150.5px;top:625.5px;width:336.5px;height:15.5px;background:#f0f0f0"></div>
<div class="a" style="left:168px;top:626px;width:55.5px;height:14.5px;background:#cdcdcd"></div>
<svg style="left:156px;top:629.8px" width="6" height="7.5" viewBox="0 0 6 7.5"><path d="M5 0.8L1.3 3.75L5 6.7" stroke="#555" stroke-width="1.9" fill="none"/></svg>
<svg style="left:475.5px;top:629.8px" width="6" height="7.5" viewBox="0 0 6 7.5"><path d="M1 0.8L4.7 3.75L1 6.7" stroke="#555" stroke-width="1.9" fill="none"/></svg>
<div class="a" style="left:514px;top:104px;width:509px;height:545px;background:#f0f0f0;border:1px solid #e0e0e0"></div>
<div class="a" style="left:605px;top:128px;width:417px;height:1px;background:#e0e0e0"></div>
<div class="a" style="left:605px;top:105px;width:1px;height:23px;background:#e0e0e0"></div>
<svg style="left:518.5px;top:110px" width="16" height="16" viewBox="0 0 16 16"><rect x="3" y="3" width="10" height="10" rx="1.3" fill="#2a9277"/><rect x="6" y="6" width="4" height="4" fill="#fff"/><g stroke="#2a9277" stroke-width="1.2"><path d="M5 0v3M8 0v3M11 0v3M5 13v3M8 13v3M11 13v3M0 5h3M0 8h3M0 11h3M13 5h3M13 8h3M13 11h3"/></g></svg>
<div class="t" style="left:537.65px;top:111.84px;font-size:12px;color:#000;transform:scaleX(0.9122);transform-origin:0 0;-webkit-text-stroke:0.18px #000;">Package</div>
<svg style="left:587.6px;top:113px" width="10.2" height="10" viewBox="0 0 10 10"><path d="M0.6 0.6H3.1L5 2.7L6.9 0.6H9.4V3.1L7.3 5L9.4 6.9V9.4H6.9L5 7.3L3.1 9.4H0.6V6.9L2.7 5L0.6 3.1Z" fill="#fafafa" stroke="#6a6a6a" stroke-width="1" stroke-linejoin="round"/></svg>
<svg style="left:860px;top:104px" width="120" height="24" viewBox="860 104 120 24"><circle cx="874.3" cy="115.9" r="5.5" fill="none" stroke="#2a9277" stroke-width="2"/><path d="M871.3 115.9h6M874.3 112.9v6" stroke="#2a9277" stroke-width="1.8"/><path d="M878 119.8l4 4.2" stroke="#2a9277" stroke-width="2.5"/><circle cx="896.7" cy="115.9" r="5.5" fill="none" stroke="#2a9277" stroke-width="2"/><path d="M893.7 115.9h6" stroke="#2a9277" stroke-width="1.8"/><path d="M900.4 119.8l4 4.2" stroke="#2a9277" stroke-width="2.5"/><path d="M922.6 112.4 A5.4 5.4 0 1 0 920.5 121.8" fill="none" stroke="#2a9277" stroke-width="2"/><path d="M919.8 115.2H927.4L923.6 120.6Z" fill="#2a9277"/><g fill="none" stroke="#a6a6a6" stroke-width="1.2"><rect x="937.6" y="112.6" width="8.8" height="8.8"/></g><path d="M940 114.5h3.5v2.2h-3v2.3h3.8" stroke="#b0b0b0" stroke-width="1" fill="none"/><g stroke="#a8a8a8" stroke-width="1.1" stroke-dasharray="1.3 1"><path d="M934 114.8h3M934 117h3M934 119.2h3M947 114.8h3M947 117h3M947 119.2h3M939.8 109.5v3M942 109.5v3M944.2 109.5v3M939.8 121.5v3M942 121.5v3M944.2 121.5v3"/></g><rect x="956.9" y="109.9" width="13.8" height="10.6" rx="1.8" fill="none" stroke="#2a9277" stroke-width="1.6"/><path d="M959.2 113.6h9.2M960.8 116.6h6" stroke="#2a9277" stroke-width="1.4"/><path d="M965.5 120.3l1.6 2.5l1.6 -2.5z" fill="#2a9277"/></svg>
<div class="a" style="left:981px;top:112px;width:9.5px;height:4px;border:1px solid #606060;background:#fff"></div>
<svg style="left:1003px;top:112px" width="10" height="10" viewBox="0 0 10 10"><rect x="0.5" y="0.5" width="9" height="9" fill="#fff" stroke="#6a6a6a" stroke-width="1"/><path d="M0.5 2.3H9.5" stroke="#7a7a7a" stroke-width="0.9"/></svg>
<div class="a" style="left:1004px;top:129px;width:1px;height:502px;background:#fafafa"></div>
<div class="a" style="left:1005px;top:148px;width:14px;height:402px;background:#cdcdcd"></div>
<svg style="left:1008.2px;top:137px" width="7.5" height="6" viewBox="0 0 7.5 6"><path d="M0.9 5.1L3.75 1.5L6.6 5.1" stroke="#555" stroke-width="1.9" fill="none"/></svg>
<svg style="left:1008.2px;top:619.2px" width="7.5" height="6" viewBox="0 0 7.5 6"><path d="M0.9 0.9L3.75 4.5L6.6 0.9" stroke="#555" stroke-width="1.9" fill="none"/></svg>
<div class="a" style="left:515px;top:630px;width:490px;height:1px;background:#fafafa"></div>
<div class="a" style="left:533px;top:631px;width:385px;height:14px;background:#cdcdcd"></div>
<svg style="left:521.5px;top:634.5px" width="6" height="7.5" viewBox="0 0 6 7.5"><path d="M5 0.8L1.3 3.75L5 6.7" stroke="#555" stroke-width="1.9" fill="none"/></svg>
<svg style="left:993px;top:634.5px" width="6" height="7.5" viewBox="0 0 6 7.5"><path d="M1 0.8L4.7 3.75L1 6.7" stroke="#555" stroke-width="1.9" fill="none"/></svg>
<svg style="left:515px;top:129px" width="489" height="501.5" viewBox="515 129 489 501.5" font-family="Liberation Sans"><defs><clipPath id="pv"><rect x="515" y="129" width="489" height="501.5"/></clipPath></defs><g clip-path="url(#pv)"><rect x="675.10" y="229" width="6.5" height="21.4" fill="#dcdcdc"/><text transform="translate(681.30,227.5) rotate(-90)" font-size="8.9" fill="#111">PTD7/UART0_TX/...</text><rect x="614.5" y="290.75" width="21.2" height="6.5" fill="#dcdcdc"/><text x="613.5" y="297.35" font-size="8.9" fill="#111" text-anchor="end">ADC1_SE4a/PTE0/...</text><rect x="973.5" y="290.75" width="21" height="6.5" fill="#c4c4c4"/><text x="995" y="297.35" font-size="8.9" fill="#111">VDD48</text><rect x="675.10" y="588.8" width="6.5" height="19.8" fill="#c4c4c4"/><text transform="translate(681.30,610) rotate(-90)" font-size="8.9" fill="#111" text-anchor="end">JT/...</text><rect x="692.00" y="229" width="6.5" height="21.4" fill="#dcdcdc"/><text transform="translate(698.20,227.5) rotate(-90)" font-size="8.9" fill="#111">ADC0_SE7b/PTD6/...</text><rect x="614.5" y="307.65" width="21.2" height="6.5" fill="#dcdcdc"/><text x="613.5" y="314.25" font-size="8.9" fill="#111" text-anchor="end">ADC1_SE5a/PTE1/...</text><rect x="973.5" y="307.65" width="21" height="6.5" fill="#c4c4c4"/><text x="995" y="314.25" font-size="8.9" fill="#111">VSS47</text><rect x="692.00" y="588.8" width="6.5" height="19.8" fill="#c4c4c4"/><text transform="translate(698.20,610) rotate(-90)" font-size="8.9" fill="#111" text-anchor="end">JT/...</text><rect x="708.90" y="229" width="6.5" height="21.4" fill="#dcdcdc"/><text transform="translate(715.10,227.5) rotate(-90)" font-size="8.9" fill="#111">ADC0_SE6b/PTD5/...</text><rect x="614.5" y="324.55" width="21.2" height="6.5" fill="#c4c4c4"/><text x="613.5" y="331.15" font-size="8.9" fill="#111" text-anchor="end">VDD3</text><rect x="973.5" y="324.55" width="21" height="6.5" fill="#dcdcdc"/><text x="995" y="331.15" font-size="8.9" fill="#111">CMP1_IN1/...</text><rect x="708.90" y="588.8" width="6.5" height="19.8" fill="#c4c4c4"/><text transform="translate(715.10,610) rotate(-90)" font-size="8.9" fill="#111" text-anchor="end">AL32</text><rect x="725.80" y="229" width="6.5" height="21.4" fill="#dcdcdc"/><text transform="translate(732.00,227.5) rotate(-90)" font-size="8.9" fill="#111">PTD4/LLWU_P14/...</text><rect x="614.5" y="341.45" width="21.2" height="6.5" fill="#c4c4c4"/><text x="613.5" y="348.05" font-size="8.9" fill="#111" text-anchor="end">VSS4</text><rect x="973.5" y="341.45" width="21" height="6.5" fill="#dcdcdc"/><text x="995" y="348.05" font-size="8.9" fill="#111">ADC0_SE...</text><rect x="725.80" y="588.8" width="6.5" height="19.8" fill="#c4c4c4"/><text transform="translate(732.00,610) rotate(-90)" font-size="8.9" fill="#111" text-anchor="end">AL32</text><rect x="742.70" y="229" width="6.5" height="21.4" fill="#dcdcdc"/><text transform="translate(748.90,227.5) rotate(-90)" font-size="8.9" fill="#111">PTD3/SPI0_SIN/...</text><rect x="614.5" y="358.35" width="21.2" height="6.5" fill="#c4c4c4"/><text x="613.5" y="364.95" font-size="8.9" fill="#111" text-anchor="end">USB0_DP</text><rect x="973.5" y="358.35" width="21" height="6.5" fill="#dcdcdc"/><text x="995" y="364.95" font-size="8.9" fill="#111">ADC0_SE...</text><rect x="742.70" y="588.8" width="6.5" height="19.8" fill="#c4c4c4"/><text transform="translate(748.90,610) rotate(-90)" font-size="8.9" fill="#111" text-anchor="end">VBAT</text><rect x="759.60" y="229" width="6.5" height="21.4" fill="#dcdcdc"/><text transform="translate(765.80,227.5) rotate(-90)" font-size="8.9" fill="#111">PTD2/LLWU_P13/...</text><rect x="614.5" y="375.25" width="21.2" height="6.5" fill="#c4c4c4"/><text x="613.5" y="381.85" font-size="8.9" fill="#111" text-anchor="end">USB0_DM</text><rect x="973.5" y="375.25" width="21" height="6.5" fill="#dcdcdc"/><text x="995" y="381.85" font-size="8.9" fill="#111">ADC0_SE...</text><rect x="759.60" y="588.8" width="6.5" height="19.8" fill="#dcdcdc"/><text transform="translate(765.80,610) rotate(-90)" font-size="8.9" fill="#111" text-anchor="end">_b/...</text><rect x="776.50" y="229" width="6.5" height="21.4" fill="#dcdcdc"/><text transform="translate(782.70,227.5) rotate(-90)" font-size="8.9" fill="#111">ADC0_SE5b/PTD1/...</text><rect x="614.5" y="392.15" width="21.2" height="6.5" fill="#c4c4c4"/><text x="613.5" y="398.75" font-size="8.9" fill="#111" text-anchor="end">VOUT33</text><rect x="973.5" y="392.15" width="21" height="6.5" fill="#dcdcdc"/><text x="995" y="398.75" font-size="8.9" fill="#111">PTB...</text><rect x="776.50" y="588.8" width="6.5" height="19.8" fill="#dcdcdc"/><text transform="translate(782.70,610) rotate(-90)" font-size="8.9" fill="#111" text-anchor="end">RX/...</text><rect x="793.40" y="229" width="6.5" height="21.4" fill="#dcdcdc"/><text transform="translate(799.60,227.5) rotate(-90)" font-size="8.9" fill="#111">PTD0/LLWU_P12/...</text><rect x="614.5" y="409.05" width="21.2" height="6.5" fill="#c4c4c4"/><text x="613.5" y="415.65" font-size="8.9" fill="#111" text-anchor="end">VREGIN</text><rect x="973.5" y="409.05" width="21" height="6.5" fill="#dcdcdc"/><text x="995" y="415.65" font-size="8.9" fill="#111">PTB...</text><rect x="793.40" y="588.8" width="6.5" height="19.8" fill="#dcdcdc"/><text transform="translate(799.60,610) rotate(-90)" font-size="8.9" fill="#111" text-anchor="end">TX/...</text><rect x="810.30" y="229" width="6.5" height="21.4" fill="#dcdcdc"/><text transform="translate(816.50,227.5) rotate(-90)" font-size="8.9" fill="#111">ADC1_SE7b/PTC11/...</text><rect x="614.5" y="425.95" width="21.2" height="6.5" fill="#c4c4c4"/><text x="613.5" y="432.55" font-size="8.9" fill="#111" text-anchor="end">ADC0_DP0/ADC1_DP3</text><rect x="973.5" y="425.95" width="21" height="6.5" fill="#dcdcdc"/><text x="995" y="432.55" font-size="8.9" fill="#111">PTB...</text><rect x="810.30" y="588.8" width="6.5" height="19.8" fill="#dcdcdc"/><text transform="translate(816.50,610) rotate(-90)" font-size="8.9" fill="#111" text-anchor="end">_b/...</text><rect x="827.20" y="229" width="6.5" height="21.4" fill="#dcdcdc"/><text transform="translate(833.40,227.5) rotate(-90)" font-size="8.9" fill="#111">ADC1_SE6b/PTC10/...</text><rect x="614.5" y="442.85" width="21.2" height="6.5" fill="#c4c4c4"/><text x="613.5" y="449.45" font-size="8.9" fill="#111" text-anchor="end">ADC0_DM0/ADC1_DM3</text><rect x="973.5" y="442.85" width="21" height="6.5" fill="#dcdcdc"/><text x="995" y="449.45" font-size="8.9" fill="#111">PTB...</text><rect x="827.20" y="588.8" width="6.5" height="19.8" fill="#dcdcdc"/><text transform="translate(833.40,610) rotate(-90)" font-size="8.9" fill="#111" text-anchor="end">P3/...</text><rect x="844.10" y="229" width="6.5" height="21.4" fill="#dcdcdc"/><text transform="translate(850.30,227.5) rotate(-90)" font-size="8.9" fill="#111">ADC1_SE5b/...</text><rect x="614.5" y="459.75" width="21.2" height="6.5" fill="#c4c4c4"/><text x="613.5" y="466.35" font-size="8.9" fill="#111" text-anchor="end">ADC1_DP0/ADC0_DP3</text><rect x="973.5" y="459.75" width="21" height="6.5" fill="#dcdcdc"/><text x="995" y="466.35" font-size="8.9" fill="#111">ADC0_SE...</text><rect x="844.10" y="588.8" width="6.5" height="19.8" fill="#dcdcdc"/><text transform="translate(850.30,610) rotate(-90)" font-size="8.9" fill="#111" text-anchor="end">IN/...</text><rect x="861.00" y="229" width="6.5" height="21.4" fill="#dcdcdc"/><text transform="translate(867.20,227.5) rotate(-90)" font-size="8.9" fill="#111">ADC1_SE4b/...</text><rect x="614.5" y="476.65" width="21.2" height="6.5" fill="#c4c4c4"/><text x="613.5" y="483.25" font-size="8.9" fill="#111" text-anchor="end">ADC1_DM0/ADC0_DM3</text><rect x="973.5" y="476.65" width="21" height="6.5" fill="#dcdcdc"/><text x="995" y="483.25" font-size="8.9" fill="#111">ADC0_SE...</text><rect x="861.00" y="588.8" width="6.5" height="19.8" fill="#dcdcdc"/><text transform="translate(867.20,610) rotate(-90)" font-size="8.9" fill="#111" text-anchor="end">H0/...</text><rect x="877.90" y="229" width="6.5" height="21.4" fill="#dcdcdc"/><text transform="translate(884.10,227.5) rotate(-90)" font-size="8.9" fill="#111">CMP0_IN1/PTC7/...</text><rect x="614.5" y="493.55" width="21.2" height="6.5" fill="#c4c4c4"/><text x="613.5" y="500.15" font-size="8.9" fill="#111" text-anchor="end">VDDA</text><rect x="973.5" y="493.55" width="21" height="6.5" fill="#dcdcdc"/><text x="995" y="500.15" font-size="8.9" fill="#111">ADC0_SE...</text><rect x="877.90" y="588.8" width="6.5" height="19.8" fill="#dcdcdc"/><text transform="translate(884.10,610) rotate(-90)" font-size="8.9" fill="#111" text-anchor="end">P4/...</text><rect x="894.80" y="229" width="6.5" height="21.4" fill="#dcdcdc"/><text transform="translate(901.00,227.5) rotate(-90)" font-size="8.9" fill="#111">CMP0_IN0/PTC6/...</text><rect x="614.5" y="510.45" width="21.2" height="6.5" fill="#c4c4c4"/><text x="613.5" y="517.05" font-size="8.9" fill="#111" text-anchor="end">VREFH</text><rect x="973.5" y="510.45" width="21" height="6.5" fill="#dcdcdc"/><text x="995" y="517.05" font-size="8.9" fill="#111">ADC0_SE...</text><rect x="894.80" y="588.8" width="6.5" height="19.8" fill="#c4c4c4"/><text transform="translate(901.00,610) rotate(-90)" font-size="8.9" fill="#111" text-anchor="end">DD30</text><rect x="911.70" y="229" width="6.5" height="21.4" fill="#dcdcdc"/><text transform="translate(917.90,227.5) rotate(-90)" font-size="8.9" fill="#111">PTC5/LLWU_P9/...</text><rect x="614.5" y="527.35" width="21.2" height="6.5" fill="#c4c4c4"/><text x="613.5" y="533.95" font-size="8.9" fill="#111" text-anchor="end">VREFL</text><rect x="973.5" y="527.35" width="21" height="6.5" fill="#c4c4c4"/><text x="995" y="533.95" font-size="8.9" fill="#111">RESET_b</text><rect x="911.70" y="588.8" width="6.5" height="19.8" fill="#c4c4c4"/><text transform="translate(917.90,610) rotate(-90)" font-size="8.9" fill="#111" text-anchor="end">SS31</text><rect x="928.60" y="229" width="6.5" height="21.4" fill="#dcdcdc"/><text transform="translate(934.80,227.5) rotate(-90)" font-size="8.9" fill="#111">PTC4/LLWU_P8/...</text><rect x="614.5" y="544.25" width="21.2" height="6.5" fill="#c4c4c4"/><text x="613.5" y="550.85" font-size="8.9" fill="#111" text-anchor="end">VSSA</text><rect x="973.5" y="544.25" width="21" height="6.5" fill="#dcdcdc"/><text x="995" y="550.85" font-size="8.9" fill="#111">XTAL0/...</text><rect x="928.60" y="588.8" width="6.5" height="19.8" fill="#dcdcdc"/><text transform="translate(934.80,610) rotate(-90)" font-size="8.9" fill="#111" text-anchor="end">18/...</text><path d="M642.7 250.4H966.5L973.5 257.4V581.8L966.5 588.8H642.7L635.7 581.8V257.4Z" fill="#bababa"/><path d="M973.5 257.4V581.8L966.5 588.8H642.7" fill="none" stroke="#787878" stroke-width="1"/><circle cx="644.6" cy="259" r="4.8" fill="#0e9a9a" stroke="#3a7a7a" stroke-width="0.5"/><rect x="655.5" y="288.50" width="97.2" height="13.9" fill="#bcbcbc" stroke="#f2f2f2" stroke-width="1.3"/><rect x="657.5" y="290.40" width="9" height="9" fill="#dddddd"/><text x="670.2" y="297.30" font-size="8.6" fill="#111">ADC0</text><rect x="655.5" y="304.80" width="97.2" height="13.9" fill="#bcbcbc" stroke="#f2f2f2" stroke-width="1.3"/><rect x="657.5" y="306.70" width="9" height="9" fill="#dddddd"/><text x="670.2" y="313.60" font-size="8.6" fill="#111">CMP1</text><rect x="655.5" y="321.10" width="97.2" height="13.9" fill="#bcbcbc" stroke="#f2f2f2" stroke-width="1.3"/><rect x="657.5" y="323.00" width="9" height="9" fill="#dddddd"/><text x="670.2" y="329.90" font-size="8.6" fill="#111">DMA</text><rect x="655.5" y="337.40" width="97.2" height="13.9" fill="#bcbcbc" stroke="#f2f2f2" stroke-width="1.3"/><rect x="657.5" y="339.30" width="9" height="9" fill="#dddddd"/><text x="670.2" y="346.20" font-size="8.6" fill="#111">FTM0</text><rect x="655.5" y="353.70" width="97.2" height="13.9" fill="#bcbcbc" stroke="#f2f2f2" stroke-width="1.3"/><rect x="657.5" y="355.60" width="9" height="9" fill="#dddddd"/><text x="670.2" y="362.50" font-size="8.6" fill="#111">FTM3</text><rect x="655.5" y="370.00" width="97.2" height="13.9" fill="#bcbcbc" stroke="#f2f2f2" stroke-width="1.3"/><rect x="657.5" y="371.90" width="9" height="9" fill="#dddddd"/><text x="670.2" y="378.80" font-size="8.6" fill="#111">GPIOC</text><rect x="655.5" y="386.30" width="97.2" height="13.9" fill="#bcbcbc" stroke="#f2f2f2" stroke-width="1.3"/><rect x="657.5" y="388.20" width="9" height="9" fill="#dddddd"/><text x="670.2" y="395.10" font-size="8.6" fill="#111">I2C0</text><rect x="655.5" y="402.60" width="97.2" height="13.9" fill="#bcbcbc" stroke="#f2f2f2" stroke-width="1.3"/><rect x="657.5" y="404.50" width="9" height="9" fill="#dddddd"/><text x="670.2" y="411.40" font-size="8.6" fill="#111">JTAG</text><rect x="655.5" y="418.90" width="97.2" height="13.9" fill="#bcbcbc" stroke="#f2f2f2" stroke-width="1.3"/><rect x="657.5" y="420.80" width="9" height="9" fill="#dddddd"/><text x="670.2" y="427.70" font-size="8.6" fill="#111">LPUART0</text><rect x="655.5" y="435.20" width="97.2" height="13.9" fill="#bcbcbc" stroke="#f2f2f2" stroke-width="1.3"/><rect x="657.5" y="437.10" width="9" height="9" fill="#cdcdcd"/><text x="670.2" y="444.00" font-size="8.6" fill="#111">RCM</text><rect x="655.5" y="451.50" width="97.2" height="13.9" fill="#bcbcbc" stroke="#f2f2f2" stroke-width="1.3"/><rect x="657.5" y="453.40" width="9" height="9" fill="#dddddd"/><text x="670.2" y="460.30" font-size="8.6" fill="#111">SPI0</text><rect x="655.5" y="467.80" width="97.2" height="13.9" fill="#bcbcbc" stroke="#f2f2f2" stroke-width="1.3"/><rect x="657.5" y="469.70" width="9" height="9" fill="#dddddd"/><text x="670.2" y="476.60" font-size="8.6" fill="#111">System Control</text><rect x="655.5" y="484.10" width="97.2" height="13.9" fill="#bcbcbc" stroke="#f2f2f2" stroke-width="1.3"/><rect x="657.5" y="486.00" width="9" height="9" fill="#dddddd"/><text x="670.2" y="492.90" font-size="8.6" fill="#111">UART1</text><rect x="655.5" y="500.40" width="97.2" height="13.9" fill="#bcbcbc" stroke="#f2f2f2" stroke-width="1.3"/><rect x="657.5" y="502.30" width="9" height="9" fill="#cdcdcd"/><text x="670.2" y="509.20" font-size="8.6" fill="#111">VREF</text><rect x="755.5" y="288.50" width="97.2" height="13.9" fill="#bcbcbc" stroke="#f2f2f2" stroke-width="1.3"/><rect x="757.5" y="290.40" width="9" height="9" fill="#dddddd"/><text x="770.2" y="297.30" font-size="8.6" fill="#111">ADC1</text><rect x="755.5" y="304.80" width="97.2" height="13.9" fill="#bcbcbc" stroke="#f2f2f2" stroke-width="1.3"/><rect x="757.5" y="306.70" width="9" height="9" fill="#dddddd"/><text x="770.2" y="313.60" font-size="8.6" fill="#111">DAC0</text><rect x="755.5" y="321.10" width="97.2" height="13.9" fill="#bcbcbc" stroke="#f2f2f2" stroke-width="1.3"/><rect x="757.5" y="323.00" width="9" height="9" fill="#dddddd"/><text x="770.2" y="329.90" font-size="8.6" fill="#111">EWM</text><rect x="755.5" y="337.40" width="97.2" height="13.9" fill="#bcbcbc" stroke="#f2f2f2" stroke-width="1.3"/><rect x="757.5" y="339.30" width="9" height="9" fill="#dddddd"/><text x="770.2" y="346.20" font-size="8.6" fill="#111">FTM1</text><rect x="755.5" y="353.70" width="97.2" height="13.9" fill="#bcbcbc" stroke="#f2f2f2" stroke-width="1.3"/><rect x="757.5" y="355.60" width="9" height="9" fill="#dddddd"/><text x="770.2" y="362.50" font-size="8.6" fill="#111">GPIOA</text><rect x="755.5" y="370.00" width="97.2" height="13.9" fill="#bcbcbc" stroke="#f2f2f2" stroke-width="1.3"/><rect x="757.5" y="371.90" width="9" height="9" fill="#dddddd"/><text x="770.2" y="378.80" font-size="8.6" fill="#111">GPIOD</text><rect x="755.5" y="386.30" width="97.2" height="13.9" fill="#bcbcbc" stroke="#f2f2f2" stroke-width="1.3"/><rect x="757.5" y="388.20" width="9" height="9" fill="#dddddd"/><text x="770.2" y="395.10" font-size="8.6" fill="#111">I2C1</text><rect x="755.5" y="402.60" width="97.2" height="13.9" fill="#bcbcbc" stroke="#f2f2f2" stroke-width="1.3"/><rect x="757.5" y="404.50" width="9" height="9" fill="#dddddd"/><text x="770.2" y="411.40" font-size="8.6" fill="#111">LLWU</text><rect x="755.5" y="418.90" width="97.2" height="13.9" fill="#bcbcbc" stroke="#f2f2f2" stroke-width="1.3"/><rect x="757.5" y="420.80" width="9" height="9" fill="#dddddd"/><text x="770.2" y="427.70" font-size="8.6" fill="#111">OSC</text><rect x="755.5" y="435.20" width="97.2" height="13.9" fill="#bcbcbc" stroke="#f2f2f2" stroke-width="1.3"/><rect x="757.5" y="437.10" width="9" height="9" fill="#dddddd"/><text x="770.2" y="444.00" font-size="8.6" fill="#111">RTC</text><rect x="755.5" y="451.50" width="97.2" height="13.9" fill="#bcbcbc" stroke="#f2f2f2" stroke-width="1.3"/><rect x="757.5" y="453.40" width="9" height="9" fill="#dddddd"/><text x="770.2" y="460.30" font-size="8.6" fill="#111">SPI1</text><rect x="755.5" y="467.80" width="97.2" height="13.9" fill="#bcbcbc" stroke="#f2f2f2" stroke-width="1.3"/><rect x="757.5" y="469.70" width="9" height="9" fill="#dddddd"/><text x="770.2" y="476.60" font-size="8.6" fill="#111">TPIU</text><rect x="755.5" y="484.10" width="97.2" height="13.9" fill="#bcbcbc" stroke="#f2f2f2" stroke-width="1.3"/><rect x="757.5" y="486.00" width="9" height="9" fill="#dddddd"/><text x="770.2" y="492.90" font-size="8.6" fill="#111">UART2</text><rect x="855.0" y="288.50" width="97.2" height="13.9" fill="#bcbcbc" stroke="#f2f2f2" stroke-width="1.3"/><rect x="857.0" y="290.40" width="9" height="9" fill="#dddddd"/><text x="869.7" y="297.30" font-size="8.6" fill="#111">CMP0</text><rect x="855.0" y="304.80" width="97.2" height="13.9" fill="#bcbcbc" stroke="#f2f2f2" stroke-width="1.3"/><rect x="857.0" y="306.70" width="9" height="9" fill="#cdcdcd"/><text x="869.7" y="313.60" font-size="8.6" fill="#111">DAC1</text><rect x="855.0" y="321.10" width="97.2" height="13.9" fill="#bcbcbc" stroke="#f2f2f2" stroke-width="1.3"/><rect x="857.0" y="323.00" width="9" height="9" fill="#dddddd"/><text x="869.7" y="329.90" font-size="8.6" fill="#111">FB</text><rect x="855.0" y="337.40" width="97.2" height="13.9" fill="#bcbcbc" stroke="#f2f2f2" stroke-width="1.3"/><rect x="857.0" y="339.30" width="9" height="9" fill="#dddddd"/><text x="869.7" y="346.20" font-size="8.6" fill="#111">FTM2</text><rect x="855.0" y="353.70" width="97.2" height="13.9" fill="#bcbcbc" stroke="#f2f2f2" stroke-width="1.3"/><rect x="857.0" y="355.60" width="9" height="9" fill="#dddddd"/><text x="869.7" y="362.50" font-size="8.6" fill="#111">GPIOB</text><rect x="855.0" y="370.00" width="97.2" height="13.9" fill="#bcbcbc" stroke="#f2f2f2" stroke-width="1.3"/><rect x="857.0" y="371.90" width="9" height="9" fill="#dddddd"/><text x="869.7" y="378.80" font-size="8.6" fill="#111">GPIOE</text><rect x="855.0" y="386.30" width="97.2" height="13.9" fill="#bcbcbc" stroke="#f2f2f2" stroke-width="1.3"/><rect x="857.0" y="388.20" width="9" height="9" fill="#dddddd"/><text x="869.7" y="395.10" font-size="8.6" fill="#111">I2S0</text><rect x="855.0" y="402.60" width="97.2" height="13.9" fill="#bcbcbc" stroke="#f2f2f2" stroke-width="1.3"/><rect x="857.0" y="404.50" width="9" height="9" fill="#dddddd"/><text x="869.7" y="411.40" font-size="8.6" fill="#111">LPTMR0</text><rect x="855.0" y="418.90" width="97.2" height="13.9" fill="#bcbcbc" stroke="#f2f2f2" stroke-width="1.3"/><rect x="857.0" y="420.80" width="9" height="9" fill="#dddddd"/><text x="869.7" y="427.70" font-size="8.6" fill="#111">PDB0</text><rect x="855.0" y="435.20" width="97.2" height="13.9" fill="#bcbcbc" stroke="#f2f2f2" stroke-width="1.3"/><rect x="857.0" y="437.10" width="9" height="9" fill="#dddddd"/><text x="869.7" y="444.00" font-size="8.6" fill="#111">SIM</text><rect x="855.0" y="451.50" width="97.2" height="13.9" fill="#bcbcbc" stroke="#f2f2f2" stroke-width="1.3"/><rect x="857.0" y="453.40" width="9" height="9" fill="#cdcdcd"/><text x="869.7" y="460.30" font-size="8.6" fill="#111">SUPPLY</text><rect x="855.0" y="467.80" width="97.2" height="13.9" fill="#bcbcbc" stroke="#f2f2f2" stroke-width="1.3"/><rect x="857.0" y="469.70" width="9" height="9" fill="#dddddd"/><text x="869.7" y="476.60" font-size="8.6" fill="#111">UART0</text><rect x="855.0" y="484.10" width="97.2" height="13.9" fill="#bcbcbc" stroke="#f2f2f2" stroke-width="1.3"/><rect x="857.0" y="486.00" width="9" height="9" fill="#dddddd"/><text x="869.7" y="492.90" font-size="8.6" fill="#111">USB0</text><text x="669.2" y="570.4" font-size="15.3" fill="#333">MK22FN512VLH12 - LQFP 64 package</text></g></svg>
<div class="a" style="left:421.3px;top:88px;width:262.5px;height:18.2px;background:#fff;border:1px solid #767676;box-shadow:2px 2px 2px rgba(0,0,0,0.25)"></div>
<div class="t" style="left:426.65px;top:91.84px;font-size:12px;color:#575757;transform:scaleX(0.9737);transform-origin:0 0;-webkit-text-stroke:0.18px #575757;">Configuration was modified, click to update code</div>
<svg style="left:421px;top:71px" width="12" height="19" viewBox="0 0 12 19"><path d="M0.5 0.5V16L4 12.5L6.5 18.3L9 17.2L6.5 11.6H11.3Z" fill="#fff" stroke="#000" stroke-width="1"/></svg>
</body></html>
